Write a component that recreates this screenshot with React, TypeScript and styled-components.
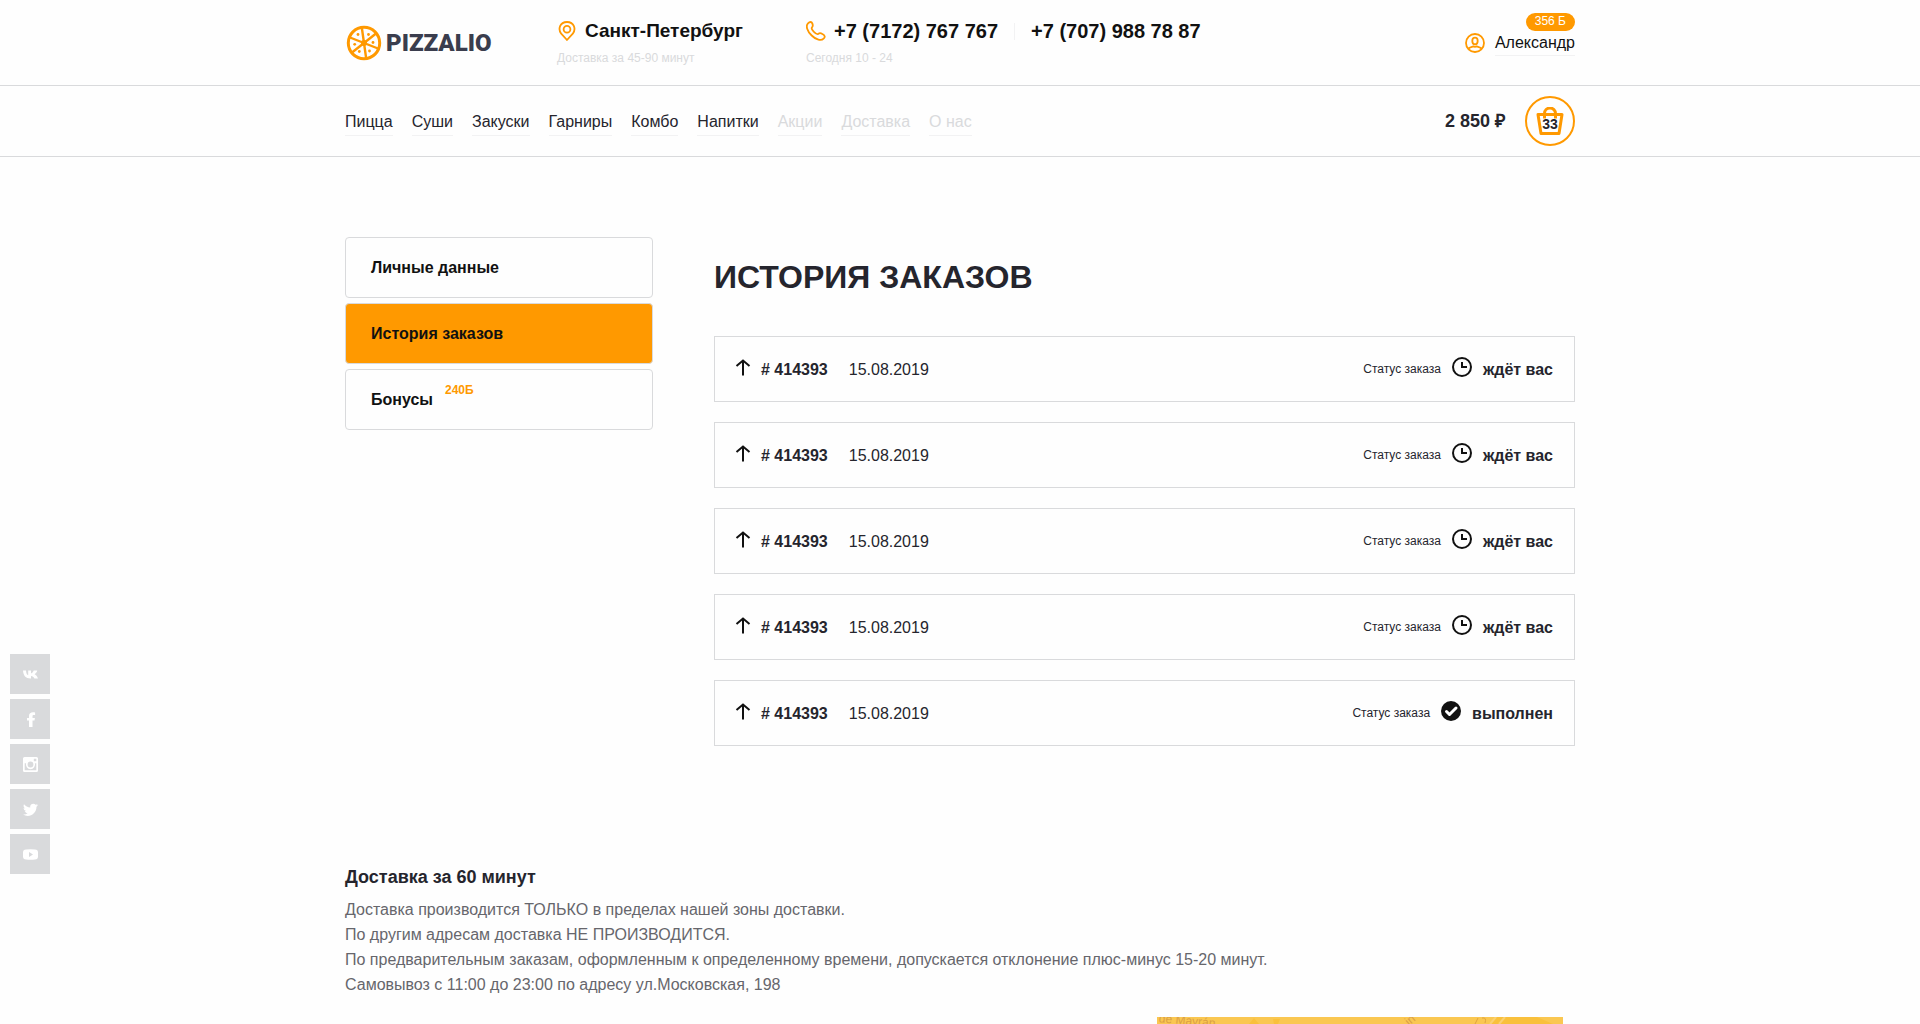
import React from 'react';
import styled, { createGlobalStyle } from 'styled-components';

const orange = '#ff9900';
const line = '#d9dadc';
const faint = '#f2f2f3';
const ink = '#25252d';

const GlobalStyle = createGlobalStyle`
  *, *::before, *::after { box-sizing: border-box; }
  body {
    margin: 0;
    background: #fefefe;
    color: ${ink};
    font: 16px/25px "Liberation Sans", Arial, sans-serif;
    overflow-x: hidden;
  }
  a { color: inherit; text-decoration: none; }
  svg { display: block; flex: none; }
  h1, h2, p, ul { margin: 0; padding: 0; }
  ul { list-style: none; }
`;

const Container = styled.div`
  width: 100%;
  max-width: 1260px;
  margin: 0 auto;
  padding: 0 15px;
`;

const TopBar = styled.header`
  border-bottom: 1px solid ${line};
`;

const TopRow = styled(Container)`
  display: flex;
  align-items: flex-start;
  padding-top: 18px;
  padding-bottom: 17px;
`;

const Logo = styled.a`
  display: flex;
  align-items: center;
  gap: 4px;
  width: 212px;
  height: 50px;
  padding-left: 1px;
  color: #3a3d4d;
  font: 900 24px/50px Roboto, "Liberation Sans", sans-serif;
`;

const Contact = styled.div<{ $width?: number }>`
  ${(p) => (p.$width ? `width: ${p.$width}px;` : '')}
`;

const ContactLine = styled.div<{ $large?: boolean }>`
  display: flex;
  align-items: center;
  gap: 8px;
  height: 26px;
  color: #111;
  font-size: ${(p) => (p.$large ? 20 : 19)}px;
  font-weight: bold;
  line-height: 24px;
  white-space: nowrap;
`;

const Divider = styled.span`
  width: 1px;
  height: 17px;
  margin: 0 8px;
  background: ${faint};
`;

const Note = styled.p`
  margin-top: 5px;
  color: ${line};
  font-size: 12px;
  line-height: 18px;
`;

const User = styled.div`
  position: relative;
  display: flex;
  align-items: center;
  gap: 10px;
  margin-left: auto;
  padding-top: 12px;
`;

const UserName = styled.a`
  border-bottom: 1px solid ${faint};
  color: #111;
`;

const Badge = styled.span`
  position: absolute;
  top: -5px;
  right: 0;
  height: 18px;
  padding: 0 9px;
  border-radius: 9px;
  background: ${orange};
  color: #fff;
  font-size: 12px;
  line-height: 17px;
`;

const NavBar = styled.div`
  border-bottom: 1px solid ${line};
`;

const NavRow = styled(Container)`
  display: flex;
  align-items: center;
  height: 70px;
`;

const Menu = styled.ul`
  display: flex;
  gap: 19px;
`;

const MenuLink = styled.a<{ $muted?: boolean }>`
  display: block;
  padding: 2px 0 1px;
  border-bottom: 1px solid ${faint};
  color: ${(p) => (p.$muted ? line : ink)};
`;

const Cart = styled.div`
  display: flex;
  align-items: center;
  gap: 20px;
  margin-left: auto;
  font-size: 18px;
  font-weight: bold;
`;

const CartButton = styled.button`
  position: relative;
  display: grid;
  place-items: center;
  width: 50px;
  height: 50px;
  padding: 0;
  border: 2px solid ${orange};
  border-radius: 50%;
  background: none;
  color: ${orange};
`;

const CartCount = styled.span`
  position: absolute;
  top: 18px;
  left: 0;
  right: 0;
  color: ${ink};
  font: bold 14px/16px "Liberation Sans", Arial, sans-serif;
  text-align: center;
`;

const Account = styled(Container)`
  display: grid;
  grid-template-columns: 308px 1fr;
  gap: 61px;
  align-items: start;
  padding-top: 80px;
`;

const Tabs = styled.nav`
  display: flex;
  flex-direction: column;
  gap: 5px;
`;

const Tab = styled.a<{ $active?: boolean }>`
  display: flex;
  align-items: center;
  gap: 12px;
  height: 61px;
  padding: 0 25px;
  border: 1px solid ${line};
  border-radius: 4px;
  background: ${(p) => (p.$active ? orange : 'transparent')};
  color: #111;
  font-weight: bold;
`;

const Sup = styled.span`
  align-self: flex-start;
  padding-top: 8px;
  color: ${orange};
  font-size: 12px;
`;

const Title = styled.h1`
  padding-top: 20px;
  font-size: 32px;
  line-height: 40px;
`;

const Orders = styled.ul`
  display: grid;
  gap: 20px;
  margin-top: 39px;
`;

const Order = styled.li`
  display: flex;
  align-items: center;
  height: 66px;
  padding: 0 21px 0 20px;
  border: 1px solid ${line};
`;

const OrderToggle = styled.button`
  padding: 0 0 4px;
  margin-right: 10px;
  border: 0;
  background: none;
`;

const OrderNumber = styled.strong`
  margin-right: 21px;
`;

const OrderStatus = styled.div`
  display: flex;
  align-items: center;
  gap: 11px;
  margin-left: auto;
  font-weight: bold;
`;

const StatusLabel = styled.span`
  font-size: 12px;
  font-weight: normal;
`;

const StatusIcon = styled.span`
  padding-bottom: 4px;
`;

const Delivery = styled(Container)`
  padding-top: 119px;
`;

const DeliveryTitle = styled.h2`
  margin-bottom: 7px;
  font-size: 18px;
  line-height: 25px;
`;

const DeliveryText = styled.p`
  color: #66666c;
`;

const MapWrap = styled.div`
  display: flex;
  justify-content: flex-end;
  padding: 20px 12px 0 0;
`;

const Social = styled.ul`
  position: fixed;
  left: 10px;
  bottom: 150px;
  display: grid;
  gap: 5px;
`;

const SocialLink = styled.a`
  display: grid;
  place-items: center;
  width: 40px;
  height: 40px;
  background: ${line};
  color: #fff;
`;

const PizzaIcon = () => (
  <svg width="36" height="36" viewBox="0 0 36 36" fill="none" stroke={orange} aria-hidden="true">
    <circle cx="18" cy="18" r="15.7" strokeWidth="3" />
    <path d="M15.8 2.5 20.2 33.5M4 12.5 32 23.5M30 8.5 6 27.5" strokeWidth="2.4" />
    <g fill={orange} stroke="none">
      <circle cx="18" cy="18" r="3" />
      <circle cx="12" cy="9.5" r="1.4" />
      <circle cx="22.5" cy="9.5" r="1.4" />
      <circle cx="27" cy="17.5" r="1.4" />
      <circle cx="8.7" cy="19.300" r="1.400" />
      <circle cx="13.300" cy="26.500" r="1.400" />
      <circle cx="23.500" cy="26" r="1.400" />
    </g>
  </svg>
);

const PinIcon = () => (
  <svg width="20" height="20" viewBox="0 0 20 20" fill="none" stroke={orange} strokeWidth="1.8" aria-hidden="true">
    <path d="M10 19 4.200 12.700C0.800 8.200 2.700 1 10 1s9.200 7.200 5.800 11.700Z" strokeLinejoin="round" />
    <circle cx="10" cy="8.300" r="3.400" />
  </svg>
);

const PhoneIcon = () => (
  <svg width="20" height="20" viewBox="0 0 20 20" fill="none" stroke={orange} strokeWidth="1.800" strokeLinejoin="round" aria-hidden="true">
    <path d="M2 2.300C3.800.500 5.600.600 6.300 2.400c.700 1.700.900 2.800-.300 3.900-1 1-.400 2.100 1.700 4.400 2.200 2.300 3.500 3.100 4.600 2.200 1.200-1.100 2.300-1 4.100.1 2.500 1.400 3.100 2.800 1.200 4.700-2.400 2.400-7.500 1.300-11.900-3.200C1.100 10-.500 4.800 2 2.300Z" />
  </svg>
);

const UserIcon = () => (
  <svg width="20" height="20" viewBox="0 0 20 20" fill="none" stroke={orange} strokeWidth="1.800" aria-hidden="true">
    <circle cx="10" cy="10" r="9" />
    <ellipse cx="10" cy="8" rx="2.700" ry="3.300" />
    <path d="M3.500 15.500C5 14.200 7 13.800 8.300 13.400q1.700.8 3.400 0c1.300.4 3.300.8 4.800 2.100" />
  </svg>
);

const BagIcon = () => (
  <svg width="28" height="28" viewBox="0 0 28 28" fill="none" stroke={orange} strokeWidth="3" strokeLinejoin="round" aria-hidden="true">
    <path d="M2 7.500h24L23 26.500H5Z" />
    <path d="M8.500 11.500V6.500a5.500 5.500 0 0 1 11 0v5" />
  </svg>
);

const ArrowIcon = () => (
  <svg width="16" height="17" viewBox="0 0 16 17" fill="none" stroke="#111" strokeWidth="2" aria-hidden="true">
    <path d="M8 16.500V1.500M1.500 7 8 1.500 14.500 7" />
  </svg>
);

const ClockIcon = () => (
  <svg width="20" height="20" viewBox="0 0 20 20" fill="none" stroke="#111" strokeWidth="2" aria-hidden="true">
    <circle cx="10" cy="10" r="9" />
    <path d="M10 5v5h5" />
  </svg>
);

const DoneIcon = () => (
  <svg width="20" height="20" viewBox="0 0 20 20" fill="none" aria-hidden="true">
    <circle cx="10" cy="10" r="10" fill="#111" />
    <path d="m5.500 10.500 3 3 6.500-6.500" stroke="#fff" strokeWidth="3" strokeLinecap="round" strokeLinejoin="round" />
  </svg>
);

const MapPicture = () => (
  <svg width="406" height="200" viewBox="0 0 406 200" aria-hidden="true">
    <rect width="406" height="200" fill="#fac751" />
    <path d="M92 7l5-6 5 6zM116 2h7l-2 5h-4zM334 7l6-7h40l16 7z" fill="#f9c03c" />
    <path d="M333 7l6-7M342 7l6-7" stroke="#fbd070" strokeWidth="2" />
    <g fill="#dba045" fontFamily="Liberation Sans, sans-serif" fontSize="12">
      <text x="2" y="5" transform="rotate(5)">de Mayrán</text>
      <text x="252" y="9" transform="rotate(-40 252 9)">in</text>
    </g>
    <path d="M318 7l3-6M325 1q5-1 3 5" fill="none" stroke="#e0a33f" />
  </svg>
);

const socials: { name: string; icon: React.ReactNode }[] = [
  {
    name: 'VK',
    icon: (
      <path d="M7.500 11.500C2.700 11.500.300 8.500 0 3.500h3c.1 3 1.200 4.500 2.200 4.800V3.500H8v2.900c1.100-.1 2.200-1.400 2.700-2.900h3.600c-.4 1.700-1.700 3-2.700 3.700 1 .5 2.500 1.700 3.400 4.300h-3.600c-.6-1.500-1.900-2.400-3.400-2.600v2.600z" />
    ),
  },
  {
    name: 'Facebook',
    icon: <path d="M9.500 15V8.500h2l.4-2.600H9.500V4.300c0-.9.400-1.300 1.300-1.300h1.300V.400C11.500.200 10.800.200 10 .200 7.700.200 6 1.500 6 3.900v2H4v2.600h2V15z" />,
  },
  {
    name: 'Instagram',
    icon: (
      <path
        fillRule="evenodd"
        d="M1.500 0h12A1.500 1.500 0 0 1 15 1.500v12a1.500 1.500 0 0 1-1.500 1.500h-12A1.500 1.500 0 0 1 0 13.500v-12A1.500 1.500 0 0 1 1.500 0ZM10.800 1.700v2.500h2.500V1.700ZM1.700 6.200v7h11.600v-7h-1.400a4.600 4.600 0 1 1-8.800 0ZM7.500 4.600a2.900 2.900 0 1 0 0 5.800 2.900 2.900 0 0 0 0-5.800Z"
      />
    ),
  },
  {
    name: 'Twitter',
    icon: (
      <path d="M15 3.100c-.6.300-1.100.4-1.800.5.700-.4 1.100-1 1.400-1.700-.6.400-1.300.6-2 .8A3.100 3.100 0 0 0 7.300 5.500C4.700 5.400 2.500 4.100 1 2.300c-.8 1.400-.4 3.200 1 4.100-.5 0-1-.2-1.400-.4 0 1.500 1 2.700 2.500 3-.4.200-.9.200-1.400.1.400 1.200 1.500 2.100 2.900 2.100A6.200 6.200 0 0 1 0 12.500c5.900 3.700 13.600-.3 13.500-7.800.6-.4 1.100-1 1.500-1.600Z" />
    ),
  },
  {
    name: 'YouTube',
    icon: (
      <path
        fillRule="evenodd"
        d="M3 2.400Q7.500 2 12 2.400 15 2.500 15 5.500v4q0 3-3 3.100-4.500.400-9 0-3-.1-3-3.100v-4q0-3 3-3.100ZM6 5v5l4-2.500Z"
      />
    ),
  },
];

const menu = ['Пицца', 'Суши', 'Закуски', 'Гарниры', 'Комбо', 'Напитки'];
const mutedMenu = ['Акции', 'Доставка', 'О нас'];
const orders = [false, false, false, false, true].map((done) => ({
  number: '414393',
  date: '15.08.2019',
  done,
}));

export default function App() {
  return (
    <>
      <GlobalStyle />
      <TopBar>
        <TopRow>
          <Logo href="#">
            <PizzaIcon />
            PIZZALIO
          </Logo>
          <Contact $width={249}>
            <ContactLine>
              <PinIcon />
              <a href="#">Санкт-Петербург</a>
            </ContactLine>
            <Note>Доставка за 45-90 минут</Note>
          </Contact>
          <Contact>
            <ContactLine $large>
              <PhoneIcon />
              <a href="tel:+77172767767">+7 (7172) 767 767</a>
              <Divider />
              <a href="tel:+77079887887">+7 (707) 988 78 87</a>
            </ContactLine>
            <Note>Сегодня 10 - 24</Note>
          </Contact>
          <User>
            <UserIcon />
            <UserName href="#">Александр</UserName>
            <Badge>356 Б</Badge>
          </User>
        </TopRow>
      </TopBar>
      <NavBar>
        <NavRow>
          <nav>
            <Menu>
              {menu.map((item) => (
                <li key={item}>
                  <MenuLink href="#">{item}</MenuLink>
                </li>
              ))}
              {mutedMenu.map((item) => (
                <li key={item}>
                  <MenuLink href="#" $muted>
                    {item}
                  </MenuLink>
                </li>
              ))}
            </Menu>
          </nav>
          <Cart>
            <span>2 850 ₽</span>
            <CartButton type="button" aria-label="Корзина">
              <BagIcon />
              <CartCount>33</CartCount>
            </CartButton>
          </Cart>
        </NavRow>
      </NavBar>
      <Account>
        <Tabs>
          <Tab href="#">Личные данные</Tab>
          <Tab href="#" $active>
            История заказов
          </Tab>
          <Tab href="#">
            Бонусы <Sup>240Б</Sup>
          </Tab>
        </Tabs>
        <main>
          <Title>ИСТОРИЯ ЗАКАЗОВ</Title>
          <Orders>
            {orders.map((order, i) => (
              <Order key={i}>
                <OrderToggle type="button" aria-label="Подробнее о заказе">
                  <ArrowIcon />
                </OrderToggle>
                <OrderNumber># {order.number}</OrderNumber>
                <span>{order.date}</span>
                <OrderStatus>
                  <StatusLabel>Статус заказа</StatusLabel>
                  <StatusIcon>{order.done ? <DoneIcon /> : <ClockIcon />}</StatusIcon>
                  <span>{order.done ? 'выполнен' : 'ждёт вас'}</span>
                </OrderStatus>
              </Order>
            ))}
          </Orders>
        </main>
      </Account>
      <Delivery>
        <DeliveryTitle>Доставка за 60 минут</DeliveryTitle>
        <DeliveryText>Доставка производится ТОЛЬКО в пределах нашей зоны доставки.</DeliveryText>
        <DeliveryText>По другим адресам доставка НЕ ПРОИЗВОДИТСЯ.</DeliveryText>
        <DeliveryText>
          По предварительным заказам, оформленным к определенному времени, допускается отклонение плюс-минус 15-20 минут.
        </DeliveryText>
        <DeliveryText>Самовывоз с 11:00 до 23:00 по адресу ул.Московская, 198</DeliveryText>
        <MapWrap>
          <MapPicture />
        </MapWrap>
      </Delivery>
      <Social>
        {socials.map((s) => (
          <li key={s.name}>
            <SocialLink href="#" aria-label={s.name}>
              <svg width="15" height="15" viewBox="0 0 15 15" fill="currentColor" aria-hidden="true">
                {s.icon}
              </svg>
            </SocialLink>
          </li>
        ))}
      </Social>
    </>
  );
}
